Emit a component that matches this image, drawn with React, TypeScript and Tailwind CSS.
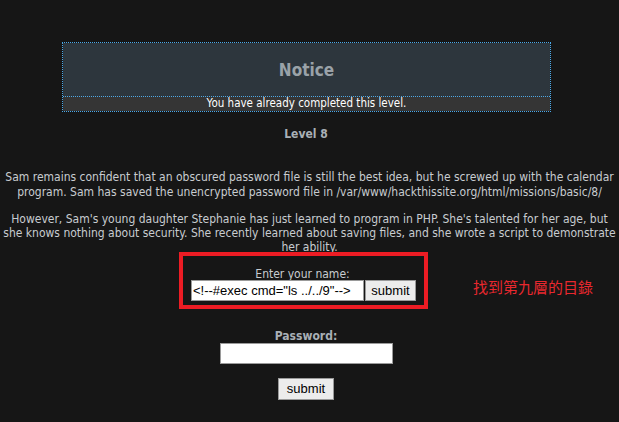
import React from 'react';

const sans = { fontFamily: '"DejaVu Sans Condensed", "DejaVu Sans", sans-serif' };

export default function App() {
  return (
    <div className="w-[619px] h-[422px] bg-[#161616] overflow-hidden text-[#c8ccd0]" style={sans}>
      {/* Notice */}
      <div className="ml-[62px] mt-[42px] w-[489px] border border-dotted border-[#4aa8e8]">
        <div className="h-[53px] bg-[#2d363d] flex items-center justify-center pt-[2px] text-[17px] font-bold text-[#9aa2a8]">
          Notice
        </div>
        <div className="h-[15px] bg-[#353535] border-t border-dotted border-[#4aa8e8] flex items-center justify-center text-[11.5px] leading-none text-white">
          You have already completed this level.
        </div>
      </div>

      <div className="mt-[13px] text-center text-[12px] font-bold text-[#a9b0b6] pr-[7px]">Level 8</div>

      <div className="mt-[27px] text-center text-[12px] leading-[14.5px]">
        Sam remains confident that an obscured password file is still the best idea, but he screwed up with the calendar
        <br />
        program. Sam has saved the unencrypted password file in /var/www/hackthissite.org/html/missions/basic/8/
      </div>

      <div className="mt-[13px] text-center text-[12px] leading-[14px]">
        However, Sam's young daughter Stephanie has just learned to program in PHP. She's talented for her age, but
        <br />
        she knows nothing about security. She recently learned about saving files, and she wrote a script to demonstrate
        <br />
        her ability.
      </div>

      {/* name form */}
      <div className="flex items-start -mt-[2px]">
        <div className="ml-[179px] w-[249px] h-[57px] border-[4px] border-[#ed1c24] flex flex-col items-center pt-[11px]">
          <div className="text-[12px] leading-[14px] pr-[2px]">Enter your name:</div>
          <div className="flex items-center -mt-[1px]" style={{ fontFamily: '"Liberation Sans", Arial, sans-serif' }}>
            <div className="w-[173px] h-[21px] bg-white border border-[#9a9a9a] text-black text-[13px] leading-[19px] pl-[1px] overflow-hidden whitespace-nowrap">
              {'<!--#exec cmd="ls ../../9"-->'}
            </div>
            <button className="ml-[1px] w-[51px] h-[21px] bg-[#ececec] border border-[#9a9a9a] text-black text-[13px] leading-[19px]">
              submit
            </button>
          </div>
        </div>
        <div
          className="ml-[45px] mt-[25px] text-[15px] leading-[20px] text-[#e8282e]"
          style={{ fontFamily: '"Noto Sans CJK TC", sans-serif' }}
        >
          找到第九層的目錄
        </div>
      </div>

      {/* password form */}
      <div className="flex flex-col items-center mt-[20px] pr-[7px]">
        <div className="text-[12px] leading-[14px] font-bold text-[#a9b0b6]">Password:</div>
        <div className="w-[173px] h-[21px] bg-white border border-[#9a9a9a]" />
        <button
          className="mt-[14px] w-[56px] h-[22px] bg-[#ececec] border border-[#9a9a9a] text-black text-[13px] leading-[20px]"
          style={{ fontFamily: '"Liberation Sans", Arial, sans-serif' }}
        >
          submit
        </button>
      </div>
    </div>
  );
}
